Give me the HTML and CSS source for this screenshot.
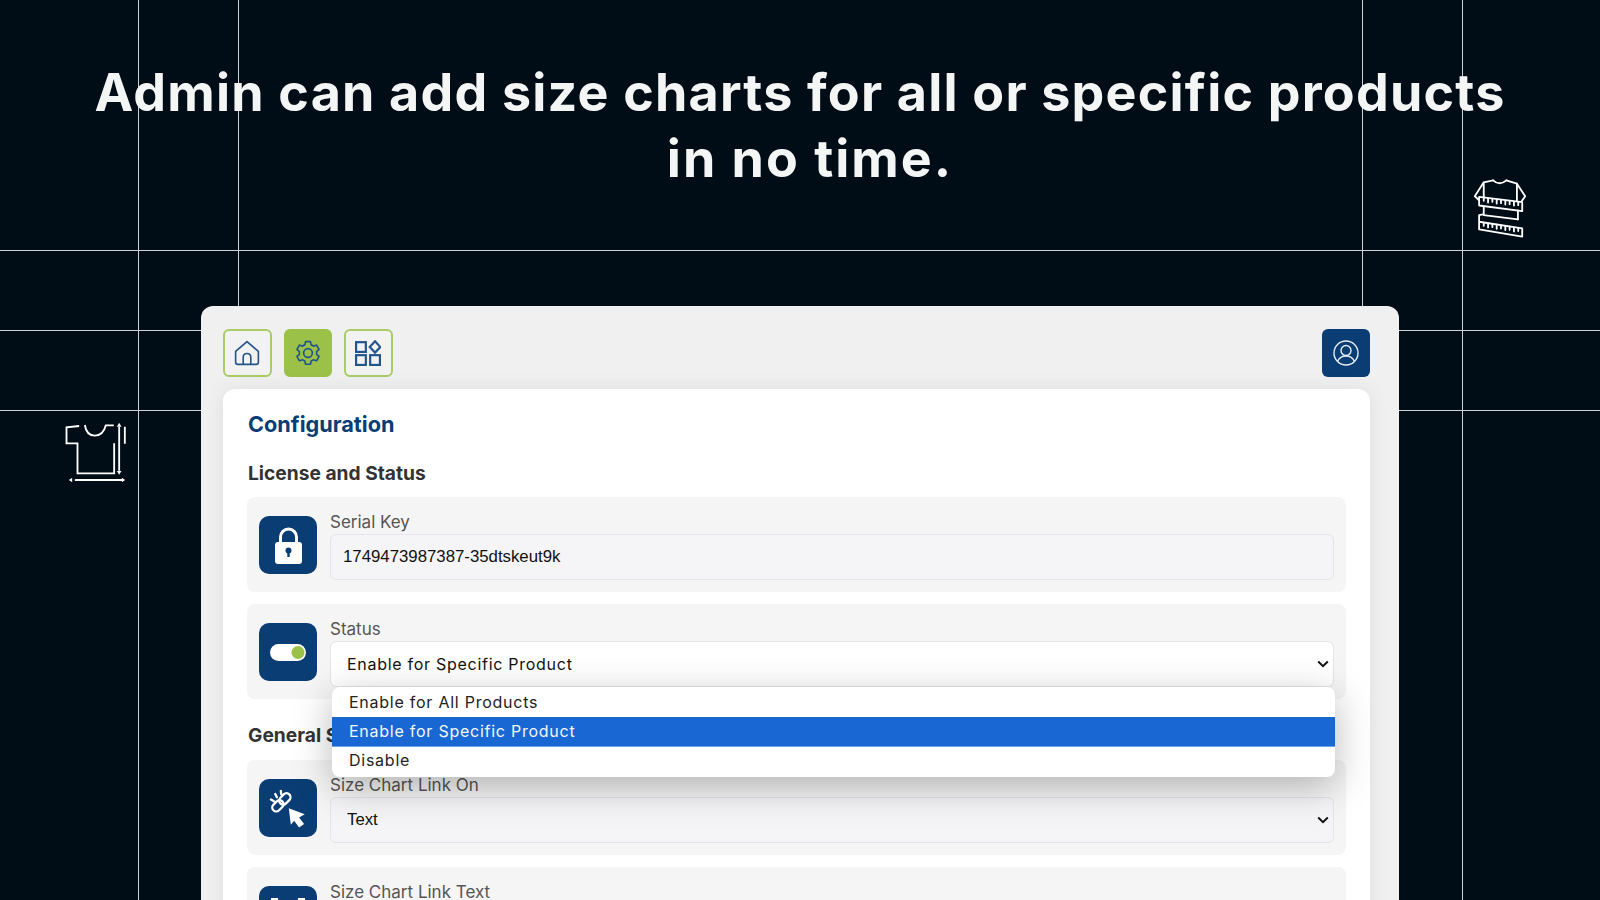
FILE: index.html
```html
<!DOCTYPE html>
<html lang="en">
<head>
<meta charset="utf-8">
<title>Size chart configuration</title>
<link rel="stylesheet" href="styles.css">
</head>
<body>
<div class="stage">
  <h1 class="headline">Admin can add size charts for all or specific products<br><span class="headline-tail">in no time.</span></h1>

  <svg class="deco deco-ruler" viewBox="100 52 165 190" fill="none" stroke="#fff" stroke-width="5.5" stroke-linejoin="round" stroke-linecap="round">
    <path d="M160 62 L132 68 L105 110 L118 122 M200 62 L232 72 L257 110 L247 124"/>
    <path d="M160 62 Q180 80 200 62"/>
    <path d="M132 68 V112 M232 72 V124"/>
    <path d="M118 112 L248 128 V155 L118 138 Z"/>
    <path d="M132 115 v9 M145 117 v12 M158 118 v9 M171 120 v12 M184 122 v9 M197 123 v12 M210 125 v9 M223 126 v12 M236 128 v9"/>
    <path d="M132 140 V165 M235 153 V180"/>
    <path d="M132 167 L235 180"/>
    <path d="M130 165 L118 167 V210 L248 232 V207 L118 187"/>
    <path d="M132 190 v9 M145 192 v12 M158 194 v9 M171 196 v12 M184 198 v9 M197 200 v12 M210 202 v9 M223 204 v12 M236 206 v9"/>
  </svg>

  <svg class="deco deco-shirt" viewBox="40 60 200 195" fill="none" stroke="#fff" stroke-width="5.5">
    <path d="M88 78 L50 82 V130 H83 V220 H193 V130"/>
    <path d="M105 75 Q110 107 135 107 Q160 107 168 76 H192"/>
    <path d="M208 80 V212 M225 80 V131 M75 240 H218"/>
    <path d="M208 68 L201 80 H215 Z M208 224 L201 213 H215 Z M57 240 L67 233 V247 Z M226 240 L216 233 V247 Z" fill="#fff" stroke="none"/>
  </svg>

  <main class="panel">
    <nav class="toolbar">
      <div class="tabs">
        <button class="tab" aria-label="Home">
          <svg viewBox="0 0 24 24" class="tab-icon" fill="none" stroke="#23548c" stroke-width="1.5" stroke-linejoin="round"><path d="M1.5 10.5 L12 1.5 L22.5 10.5 V20.5 Q22.5 22.5 20.5 22.5 H3.5 Q1.5 22.5 1.5 20.5 Z"/><path d="M8.5 22.5 V16 Q8.5 12.5 12 12.5 Q15.5 12.5 15.5 16 V22.5"/></svg>
        </button>
        <button class="tab tab-active" aria-label="Settings">
          <svg viewBox="0 0 24 24" class="tab-icon" fill="none" stroke="#23548c" stroke-width="1.5" stroke-linejoin="round"><circle cx="12" cy="12" r="4"/><path d="M9.7 1.5 h4.6 l.6 3 a8 8 0 0 1 2.1 1.2 l2.9-1 2.3 4 -2.3 2 a8 8 0 0 1 0 2.5 l2.3 2 -2.3 4 -2.9-1 a8 8 0 0 1 -2.1 1.2 l-.6 3 h-4.6 l-.6-3 a8 8 0 0 1 -2.1-1.2 l-2.9 1 -2.3-4 2.3-2 a8 8 0 0 1 0-2.5 l-2.3-2 2.3-4 2.9 1 a8 8 0 0 1 2.1-1.2 Z"/></svg>
        </button>
        <button class="tab" aria-label="Apps">
          <svg viewBox="0 0 24 24" class="tab-icon" fill="none" stroke="#23548c" stroke-width="2"><rect x="1" y="2" width="9" height="9"/><rect x="1" y="14" width="9" height="9"/><rect x="14" y="14" width="9" height="9"/><path d="M18.5 1.2 L23.4 6.5 L18.5 11.6 L13.6 6.5 Z"/></svg>
        </button>
      </div>
      <button class="profile" aria-label="Profile">
        <svg viewBox="0 0 26 26" class="profile-icon" fill="none" stroke="#e6edf5" stroke-width="1.4"><circle cx="13" cy="13" r="12"/><circle cx="13" cy="10.5" r="5"/><path d="M4.5 21.5 Q7 16 13 16 Q19 16 21.5 21.5"/></svg>
      </button>
    </nav>

    <section class="card">
      <h2 class="card-title">Configuration</h2>

      <h3 class="section-title">License and Status</h3>
      <div class="row">
        <div class="row-icon">
          <svg viewBox="0 0 27 37" class="glyph-lock"><path d="M5.5 17 V10 A8 8 0 0 1 21.5 10 V17" fill="none" stroke="#fff" stroke-width="3"/><rect x="0" y="15" width="27" height="22" rx="3" fill="#fff"/><circle cx="13.5" cy="23.5" r="3" fill="#0a3d73"/><rect x="12.3" y="24" width="2.4" height="6" fill="#0a3d73"/></svg>
        </div>
        <div class="field">
          <label class="field-label">Serial Key</label>
          <div class="control control-input">1749473987387-35dtskeut9k</div>
        </div>
      </div>

      <div class="row">
        <div class="row-icon">
          <svg viewBox="0 0 36 17" class="glyph-toggle"><rect width="36" height="17" rx="8.5" fill="#fff"/><circle cx="28" cy="8.5" r="6.5" fill="#9bc148"/></svg>
        </div>
        <div class="field">
          <label class="field-label">Status</label>
          <div class="control control-select control-status">
            <span>Enable for Specific Product</span>
            <svg viewBox="0 0 12 8" class="chevron"><path d="M1.2 1.5 L6 6.2 L10.8 1.5" fill="none" stroke="#111" stroke-width="2"/></svg>
          </div>
          <ul class="dropdown">
            <li class="option">Enable for All Products</li>
            <li class="option option-selected">Enable for Specific Product</li>
            <li class="option">Disable</li>
          </ul>
        </div>
      </div>

      <h3 class="section-title section-general">General Settings</h3>
      <div class="row">
        <div class="row-icon">
          <svg viewBox="12 12 175 175" class="glyph-link"><g fill="none" stroke="#fff" stroke-width="7" stroke-linecap="round"><rect x="50" y="81" width="38" height="24" rx="12" transform="rotate(-45 69 93)"/><rect x="71" y="60" width="38" height="24" rx="12" transform="rotate(-45 90 72)"/><path d="M48 74 L57 79 M61 57 L66 67 M78 48 L79 58"/></g><path d="M102 100 L150 118 L133 128 L148 148 L133 158 L118 138 L108 150 Z" fill="#fff"/></svg>
        </div>
        <div class="field">
          <label class="field-label">Size Chart Link On</label>
          <div class="control control-select control-plain">
            <span>Text</span>
            <svg viewBox="0 0 12 8" class="chevron"><path d="M1.2 1.5 L6 6.2 L10.8 1.5" fill="none" stroke="#111" stroke-width="2"/></svg>
          </div>
        </div>
      </div>

      <div class="row">
        <div class="row-icon">
          <svg viewBox="0 0 36 36" class="glyph-frame"><path d="M2 8 V2 H8 M28 2 H34 V8 M2 28 V34 H8 M28 34 H34 V28" fill="none" stroke="#fff" stroke-width="2"/></svg>
        </div>
        <div class="field">
          <label class="field-label">Size Chart Link Text</label>
        </div>
      </div>
    </section>
  </main>
</div>
</body>
</html>
```
FILE: styles.css
```css
* { box-sizing: border-box; }
html, body { margin: 0; height: 100%; overflow: hidden; }
body { background: #000c16; font-family: "Inter", "Liberation Sans", sans-serif; }

.stage {
  position: relative;
  width: 1600px;
  height: 900px;
  overflow: hidden;
  display: flex;
  flex-direction: column;
  align-items: center;
  background-color: #000c16;
  background-image:
    linear-gradient(#cfd2d4, #cfd2d4),
    linear-gradient(#cfd2d4, #cfd2d4),
    linear-gradient(#cfd2d4, #cfd2d4),
    linear-gradient(#cfd2d4, #cfd2d4),
    linear-gradient(#cfd2d4, #cfd2d4),
    linear-gradient(#cfd2d4, #cfd2d4),
    linear-gradient(#cfd2d4, #cfd2d4);
  background-size:
    1px 100%, 1px 100%, 1px 100%, 1px 100%,
    100% 1px, 100% 1px, 100% 1px;
  background-position:
    138px 0, 238px 0, 1362px 0, 1462px 0,
    0 250px, 0 330px, 0 410px;
  background-repeat: no-repeat;
}

.headline {
  margin: 60px 0 0;
  width: 1500px;
  height: 130px;
  text-align: center;
  color: #f4f5f5;
  font-family: "Inter", "Liberation Sans", sans-serif;
  font-size: 52px;
  font-weight: 700;
  line-height: 65px;
  letter-spacing: 1.2px;
}
.headline-tail {
  display: inline-block;
  margin-top: 1px;
  padding-left: 20px;
  letter-spacing: 2px;
}

.deco { position: absolute; display: block; }
.deco-ruler { left: 1473px; top: 177px; width: 55px; height: 63px; }
.deco-shirt { left: 63px; top: 420px; width: 67px; height: 65px; }

.panel {
  margin-top: 116px;
  width: 1198px;
  flex: 1 0 auto;
  background: #f0f0f1;
  border-radius: 12px 12px 0 0;
  padding: 23px 29px 0 22px;
  display: flex;
  flex-direction: column;
  gap: 12px;
}

.toolbar { display: flex; justify-content: space-between; align-items: center; }
.tabs { display: flex; gap: 12px; }
.tab, .profile {
  width: 48.5px;
  height: 48px;
  padding: 0;
  border-radius: 6px;
  display: flex;
  align-items: center;
  justify-content: center;
}
.tab { background: #f2f2f3; border: 2px solid #a9cb68; }
.tab-active { background: #9bc148; border-color: #9bc148; }
.tab-icon { width: 26px; height: 26px; }
.profile { background: #0a3d73; border: none; }
.profile-icon { width: 26px; height: 26px; }

.card {
  flex: 1;
  background: #fff;
  border-radius: 12px 12px 0 0;
  box-shadow: 0 0 20px rgba(0, 0, 0, 0.08);
  padding: 22px 24px 0;
}
.card-title {
  margin: 0;
  padding-left: 1px;
  color: #0a3d73;
  font-size: 21.7px;
  font-weight: 700;
  line-height: 26px;
}
.section-title {
  margin: 24px 0 12px;
  padding-left: 1px;
  color: #333;
  font-size: 19.2px;
  font-weight: 700;
  line-height: 24px;
}
.section-general { margin-bottom: 13px; }

.row {
  display: flex;
  align-items: flex-start;
  gap: 13px;
  height: 95px;
  margin-bottom: 12px;
  padding: 12px;
  background: #f5f5f6;
  border-radius: 8px;
}
.row-icon {
  flex: none;
  width: 58px;
  height: 58px;
  margin-top: 7px;
  background: #0a3d73;
  border-radius: 10px;
  display: flex;
  align-items: center;
  justify-content: center;
}
.glyph-lock { width: 27px; height: 37px; }
.glyph-toggle { width: 36px; height: 17px; }
.glyph-link { width: 58px; height: 58px; }
.glyph-frame { width: 36px; height: 36px; }

.field { flex: 1; min-width: 0; position: relative; }
.field-label {
  display: block;
  height: 25px;
  color: #555;
  font-size: 17px;
  line-height: 26px;
}
.control {
  height: 46px;
  border: 1px solid #e4e4ea;
  border-radius: 6px;
  font-size: 16.8px;
  display: flex;
  align-items: center;
  justify-content: space-between;
}
.control-input {
  padding: 0 12px;
  background: #f5f5f7;
  color: #111;
  font-family: "Liberation Sans", sans-serif;
}
.control-select { padding: 0 4px 0 16px; color: #111; }
.control-status { background: #fff; font-size: 16px; letter-spacing: 0.72px; }
.control-plain { background: #f5f5f7; font-family: "Liberation Sans", sans-serif; }
.chevron { width: 12px; height: 8px; flex: none; }

.dropdown {
  position: absolute;
  z-index: 2;
  left: 2px;
  right: -1px;
  top: 71px;
  margin: 0;
  padding: 0;
  list-style: none;
  background: #fff;
  border-radius: 8px;
  overflow: hidden;
  box-shadow: 0 10px 38px rgba(0, 0, 0, 0.28);
}
.option {
  height: 30px;
  padding: 0 17px;
  color: #222;
  font-size: 16px;
  letter-spacing: 0.75px;
  line-height: 30px;
}
.option-selected { background: #1967d2; color: #f4f7fc; border-bottom: 1px solid #6ea2ea; line-height: 28px; }
.option:last-child { line-height: 27px; }
```
